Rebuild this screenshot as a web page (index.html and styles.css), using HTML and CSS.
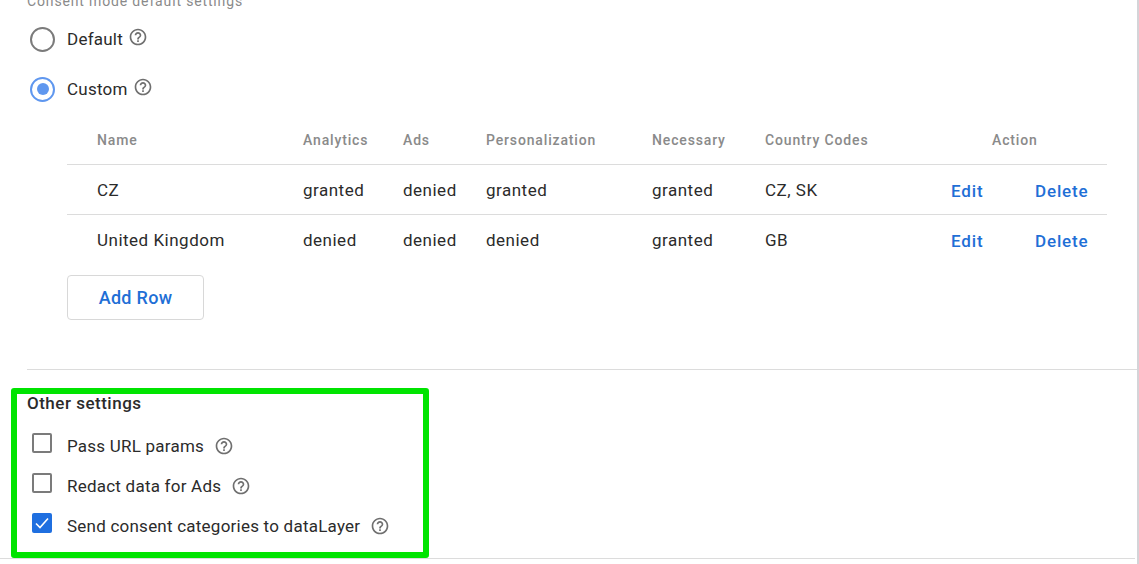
FILE: index.html
```html
<!DOCTYPE html>
<html lang="en">
<head>
    <meta charset="UTF-8">
    <title>Consent settings</title>
    <link rel="stylesheet" href="styles.css">
</head>
<body>
    <svg class="defs" width="0" height="0">
        <symbol id="help" viewBox="0 0 24 24">
            <path d="M11 18h2v-2h-2v2zm1-16C6.48 2 2 6.48 2 12s4.48 10 10 10 10-4.48 10-10S17.52 2 12 2zm0 18c-4.41 0-8-3.59-8-8s3.59-8 8-8 8 3.59 8 8-3.59 8-8 8zm0-14c-2.21 0-4 1.79-4 4h2c0-1.1.9-2 2-2s2 .9 2 2c0 2-3 1.75-3 5h2c0-2.25 3-2.5 3-5 0-2.21-1.79-4-4-4z"/>
        </symbol>
    </svg>

    <section class="consent">
        <h4 class="muted-title">Consent mode default settings</h4>

        <div class="radio-row">
            <span class="radio"></span>
            <span class="label">Default</span>
            <svg class="help raised"><use href="#help"/></svg>
        </div>
        <div class="radio-row">
            <span class="radio checked"></span>
            <span class="label">Custom</span>
            <svg class="help raised"><use href="#help"/></svg>
        </div>

        <table class="regions">
            <colgroup>
                <col class="c-name">
                <col class="c-analytics">
                <col class="c-ads">
                <col class="c-person">
                <col class="c-necessary">
                <col class="c-country">
                <col class="c-edit">
                <col class="c-delete">
            </colgroup>
            <thead>
                <tr>
                    <th class="first">Name</th>
                    <th>Analytics</th>
                    <th>Ads</th>
                    <th>Personalization</th>
                    <th>Necessary</th>
                    <th>Country Codes</th>
                    <th colspan="2" class="action">Action</th>
                </tr>
            </thead>
            <tbody>
                <tr>
                    <td class="first">CZ</td>
                    <td>granted</td>
                    <td>denied</td>
                    <td>granted</td>
                    <td>granted</td>
                    <td>CZ, SK</td>
                    <td class="link">Edit</td>
                    <td class="link">Delete</td>
                </tr>
                <tr>
                    <td class="first">United Kingdom</td>
                    <td>denied</td>
                    <td>denied</td>
                    <td>denied</td>
                    <td>granted</td>
                    <td>GB</td>
                    <td class="link">Edit</td>
                    <td class="link">Delete</td>
                </tr>
            </tbody>
        </table>

        <button class="add-row">Add Row</button>
    </section>

    <section class="other">
        <h4 class="other-title">Other settings</h4>
        <div class="check-row">
            <span class="check"></span>
            <span class="label">Pass URL params</span>
            <svg class="help"><use href="#help"/></svg>
        </div>
        <div class="check-row">
            <span class="check"></span>
            <span class="label">Redact data for Ads</span>
            <svg class="help"><use href="#help"/></svg>
        </div>
        <div class="check-row">
            <span class="check checked">
                <svg viewBox="0 0 20 20"><path d="M4 10.5l4 4 8-9"/></svg>
            </span>
            <span class="label">Send consent categories to dataLayer</span>
            <svg class="help"><use href="#help"/></svg>
        </div>
        <div class="highlight"></div>
    </section>
</body>
</html>
```

FILE: styles.css
```css
html, body {
    height: 100%;
}
body {
    margin: 0;
    box-sizing: border-box;
    border-right: 2px solid #d4d4d8;
    background: #fff;
    font-family: Roboto, "Noto Sans", sans-serif;
    font-size: 17px;
    color: #2b2b2b;
    overflow: hidden;
}
.defs {
    position: absolute;
}
.consent {
    display: flow-root;
    margin-left: 27px;
    height: 370px;
    box-sizing: border-box;
    border-bottom: 1px solid #dcdcdc;
}
.muted-title {
    margin: -8px 0 0;
    height: 22px;
    line-height: 18px;
    font-size: 14px;
    font-weight: 400;
    letter-spacing: 0.85px;
    color: #8a8a8a;
}
.radio-row {
    display: flex;
    align-items: center;
    height: 50px;
    padding-left: 3px;
}
.radio {
    width: 25px;
    height: 25px;
    box-sizing: border-box;
    border: 2px solid #7b7b7b;
    border-radius: 50%;
    margin-right: 12px;
    position: relative;
}
.radio.checked {
    border-color: #5f97ef;
}
.radio.checked::after {
    content: "";
    position: absolute;
    top: 4.5px;
    left: 4.5px;
    width: 12px;
    height: 12px;
    border-radius: 50%;
    background: #5f97ef;
}
.label {
    letter-spacing: 0.23px;
}
.help {
    width: 20px;
    height: 20px;
    fill: #6f6f6f;
    margin-left: 10px;
}
.help.raised {
    margin-left: 5px;
    margin-top: -4px;
}
.regions {
    margin: 1px 0 0 40px;
    width: 1040px;
    table-layout: fixed;
    border-collapse: collapse;
}
.c-name { width: 236px; }
.c-analytics { width: 100px; }
.c-ads { width: 83px; }
.c-person { width: 166px; }
.c-necessary { width: 113px; }
.c-country { width: 186px; }
.c-edit { width: 84px; }
.c-delete { width: 72px; }
.regions th, .regions td {
    padding: 0;
    text-align: left;
    white-space: nowrap;
}
.regions th {
    height: 49px;
    font-size: 14px;
    font-weight: 500;
    letter-spacing: 0.85px;
    color: #8a8a8a;
}
.regions td {
    height: 49px;
    letter-spacing: 0.5px;
}
.regions tr {
    border-bottom: 1px solid #dcdcdc;
}
.regions tbody tr:last-child {
    border-bottom: none;
}
.regions .first {
    padding-left: 30px;
}
.regions .action {
    padding-left: 41px;
}
.regions td.link {
    height: 47px;
    padding-top: 2px;
    color: #1f6fd6;
    font-weight: 500;
    letter-spacing: 0.85px;
}
.add-row {
    display: block;
    margin: 11px 0 0 40px;
    width: 137px;
    height: 45px;
    background: #fff;
    border: 1px solid #d8d8d8;
    border-radius: 4px;
    font-family: Roboto, sans-serif;
    font-size: 18px;
    font-weight: 500;
    letter-spacing: 0.3px;
    color: #1f6fd6;
}
.other {
    position: relative;
    height: 189px;
    margin-right: 2px;
    border-bottom: 1px solid #dcdcdc;
    padding: 24px 0 0 27px;
    box-sizing: border-box;
}
.other-title {
    margin: 0;
    height: 32px;
    line-height: 18px;
    font-size: 17px;
    font-weight: 500;
    letter-spacing: 0.5px;
}
.check-row {
    display: flex;
    align-items: center;
    height: 40px;
    padding-left: 5px;
}
.check {
    width: 20px;
    height: 20px;
    margin: -6px 15px 0 0;
    box-sizing: border-box;
    border: 2px solid #7b7b7b;
    border-radius: 2px;
}
.check.checked {
    border: none;
    background: #1f6fe0;
}
.check svg {
    display: block;
    width: 20px;
    height: 20px;
    fill: none;
    stroke: #fff;
    stroke-width: 1.6;
}
.highlight {
    position: absolute;
    left: 11px;
    top: 18px;
    width: 418px;
    height: 170px;
    box-sizing: border-box;
    border: 6px solid #00e400;
    border-radius: 3px;
}
```
